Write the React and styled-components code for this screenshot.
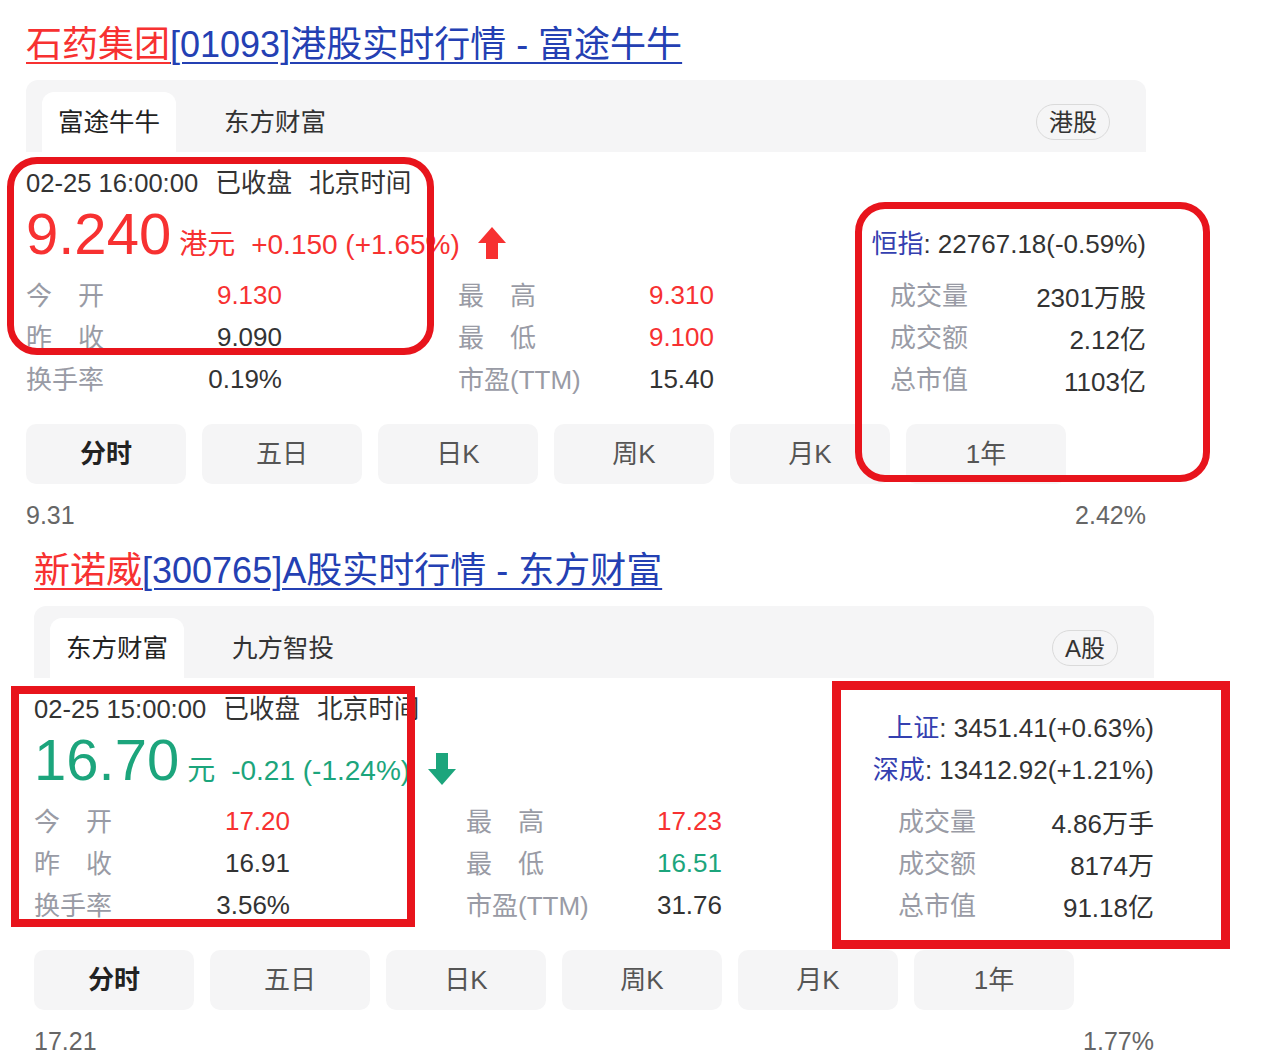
import React from 'react'
import styled, { createGlobalStyle } from 'styled-components'

const GlobalStyle = createGlobalStyle`
  body {
    margin: 0;
    background: #fff;
    font-family: "Liberation Sans", Arial, "Noto Sans CJK SC", sans-serif;
    color: #333;
  }
`

const UP = '#f73131'
const DOWN = '#1ca57c'

const Page = styled.div`
  position: relative;
  width: 1272px;
  height: 1060px;
  overflow: hidden;
  padding-top: 21px;
  box-sizing: border-box;
`

const Card = styled.section`
  width: 1120px;
  margin-left: ${p => p.$left}px;

  & + & {
    margin-top: 14px;
  }
`

const Title = styled.a`
  display: inline-block;
  font-size: 36px;
  line-height: 48px;
  color: #2440b3;
  text-decoration: underline;
  text-decoration-thickness: 2px;
  text-underline-offset: 5px;
  cursor: pointer;

  em {
    font-style: normal;
    color: ${UP};
    text-decoration: underline;
    text-decoration-thickness: 2px;
    text-underline-offset: 5px;
  }
`

const TabBar = styled.div`
  margin-top: 11px;
  height: 72px;
  box-sizing: border-box;
  padding: 12px 36px 0 16px;
  background: #f5f5f6;
  border-radius: 12px 12px 0 0;
  display: flex;
  align-items: center;
`

const Tab = styled.div`
  height: 60px;
  box-sizing: border-box;
  padding: 0 16px 6px;
  display: flex;
  align-items: center;
  font-size: 25.5px;
  color: ${p => (p.$active ? '#222' : '#333')};
  background: ${p => (p.$active ? '#fff' : 'transparent')};
  border-radius: 12px 12px 0 0;

  & + & {
    margin-left: 32px;
  }
`

const Badge = styled.span`
  margin-left: auto;
  height: 36px;
  box-sizing: border-box;
  padding: 0 12px 4px;
  display: flex;
  align-items: center;
  border: 1.5px solid #dadada;
  border-radius: 18px;
  font-size: 24px;
  color: #333;
`

const Head = styled.div`
  margin-top: 11px;
  display: flex;
  justify-content: space-between;
`

const Left = styled.div`
  display: flex;
  flex-direction: column;
`

const TimeLine = styled.div`
  font-size: 25.6px;
  line-height: 40px;
  color: #333;
  white-space: nowrap;

  span + span {
    margin-left: 17px;
  }
`

const PriceLine = styled.div`
  height: 71px;
  display: flex;
  align-items: baseline;
  white-space: nowrap;
  color: ${p => p.$color};
`

const BigPrice = styled.span`
  font-size: 58px;
  line-height: 62px;
`

const Currency = styled.span`
  margin-left: 8px;
  font-size: 28px;
`

const Change = styled.span`
  margin-left: 16px;
  font-size: 28px;
`

const Arrow = styled.svg`
  align-self: flex-end;
  width: 28px;
  height: 32px;
  margin: 0 0 15px ${p => p.$gap}px;
  fill: ${p => p.$color};
`

const Indexes = styled.div`
  align-self: flex-end;
  padding-bottom: 9px;
  text-align: right;
  font-size: 26px;
  line-height: 42px;
  color: #333;
  white-space: nowrap;

  b {
    font-weight: normal;
    color: #3440b0;
  }
`

const Stats = styled.div`
  display: grid;
  grid-template-columns: repeat(3, 256px);
  grid-auto-rows: 42px;
  justify-content: space-between;
  font-size: 26px;
`

const Stat = styled.div`
  display: flex;
  align-items: center;
  justify-content: space-between;
  white-space: nowrap;
`

const Label = styled.span`
  margin-bottom: 4px;
  color: #999ba5;
`

const Value = styled.span`
  color: ${p => p.$color || '#333'};
`

const Periods = styled.div`
  margin-top: 24px;
  display: flex;
  gap: 16px;
`

const Period = styled.div`
  width: 160px;
  height: 60px;
  box-sizing: border-box;
  padding-bottom: 5px;
  display: flex;
  align-items: center;
  justify-content: center;
  background: #f5f5f6;
  border-radius: 10px;
  font-size: 26px;
  font-weight: ${p => (p.$active ? 700 : 400)};
  color: ${p => (p.$active ? '#222' : '#555')};
`

const Axis = styled.div`
  margin-top: 13px;
  display: flex;
  justify-content: space-between;
  font-size: 25px;
  line-height: 36px;
  color: #666;
`

const Mark = styled.div`
  position: absolute;
  left: ${p => p.$x}px;
  top: ${p => p.$y}px;
  width: ${p => p.$w}px;
  height: ${p => p.$h}px;
  box-sizing: border-box;
  border: ${p => p.$b}px solid #e8141c;
  border-radius: ${p => p.$r}px;
  pointer-events: none;
`

const UpArrow = ({ color }) => (
  <Arrow $color={color} $gap={18} viewBox="0 0 28 32">
    <polygon points="14,0 28,16 20,16 20,32 8,32 8,16 0,16" />
  </Arrow>
)

const DownArrow = ({ color }) => (
  <Arrow $color={color} $gap={18} viewBox="0 0 28 32">
    <polygon points="8,0 20,0 20,16 28,16 14,32 0,16 8,16" />
  </Arrow>
)

const quotes = [
  {
    left: 26,
    name: '石药集团',
    rest: '[01093]港股实时行情 - 富途牛牛',
    tabs: ['富途牛牛', '东方财富'],
    market: '港股',
    time: '02-25 16:00:00',
    price: '9.240',
    currency: '港元',
    change: '+0.150 (+1.65%)',
    up: true,
    indexes: [['恒指', ': 22767.18(-0.59%)']],
    stats: [
      ['今\u3000开', '9.130', UP],
      ['最\u3000高', '9.310', UP],
      ['成交量', '2301万股'],
      ['昨\u3000收', '9.090'],
      ['最\u3000低', '9.100', UP],
      ['成交额', '2.12亿'],
      ['换手率', '0.19%'],
      ['市盈(TTM)', '15.40'],
      ['总市值', '1103亿'],
    ],
    high: '9.31',
    pct: '2.42%',
  },
  {
    left: 34,
    name: '新诺威',
    rest: '[300765]A股实时行情 - 东方财富',
    tabs: ['东方财富', '九方智投'],
    market: 'A股',
    time: '02-25 15:00:00',
    price: '16.70',
    currency: '元',
    change: '-0.21 (-1.24%)',
    up: false,
    indexes: [
      ['上证', ': 3451.41(+0.63%)'],
      ['深成', ': 13412.92(+1.21%)'],
    ],
    stats: [
      ['今\u3000开', '17.20', UP],
      ['最\u3000高', '17.23', UP],
      ['成交量', '4.86万手'],
      ['昨\u3000收', '16.91'],
      ['最\u3000低', '16.51', DOWN],
      ['成交额', '8174万'],
      ['换手率', '3.56%'],
      ['市盈(TTM)', '31.76'],
      ['总市值', '91.18亿'],
    ],
    high: '17.21',
    pct: '1.77%',
  },
]

const periods = ['分时', '五日', '日K', '周K', '月K', '1年']

function Quote({ q }) {
  const color = q.up ? UP : DOWN
  return (
    <Card $left={q.left}>
      <Title>
        <em>{q.name}</em>
        {q.rest}
      </Title>

      <TabBar>
        {q.tabs.map((t, i) => (
          <Tab key={t} $active={i === 0}>{t}</Tab>
        ))}
        <Badge>{q.market}</Badge>
      </TabBar>

      <Head>
        <Left>
          <TimeLine>
            <span>{q.time}</span>
            <span>已收盘</span>
            <span>北京时间</span>
          </TimeLine>
          <PriceLine $color={color}>
            <BigPrice>{q.price}</BigPrice>
            <Currency>{q.currency}</Currency>
            <Change>{q.change}</Change>
            {q.up ? <UpArrow color={color} /> : <DownArrow color={color} />}
          </PriceLine>
        </Left>
        <Indexes>
          {q.indexes.map(([n, v]) => (
            <div key={n}>
              <b>{n}</b>
              {v}
            </div>
          ))}
        </Indexes>
      </Head>

      <Stats>
        {q.stats.map(([label, value, c]) => (
          <Stat key={label}>
            <Label>{label}</Label>
            <Value $color={c}>{value}</Value>
          </Stat>
        ))}
      </Stats>

      <Periods>
        {periods.map((p, i) => (
          <Period key={p} $active={i === 0}>{p}</Period>
        ))}
      </Periods>

      <Axis>
        <span>{q.high}</span>
        <span>{q.pct}</span>
      </Axis>
    </Card>
  )
}

export default function App() {
  return (
    <Page>
      <GlobalStyle />
      {quotes.map(q => (
        <Quote key={q.name} q={q} />
      ))}

      <Mark $x={7} $y={157} $w={427} $h={198} $b={7} $r={30} />
      <Mark $x={855} $y={202} $w={355} $h={280} $b={7} $r={30} />
      <Mark $x={11} $y={686} $w={404} $h={241} $b={8} $r={0} />
      <Mark $x={832} $y={681} $w={398} $h={268} $b={9} $r={0} />
    </Page>
  )
}
